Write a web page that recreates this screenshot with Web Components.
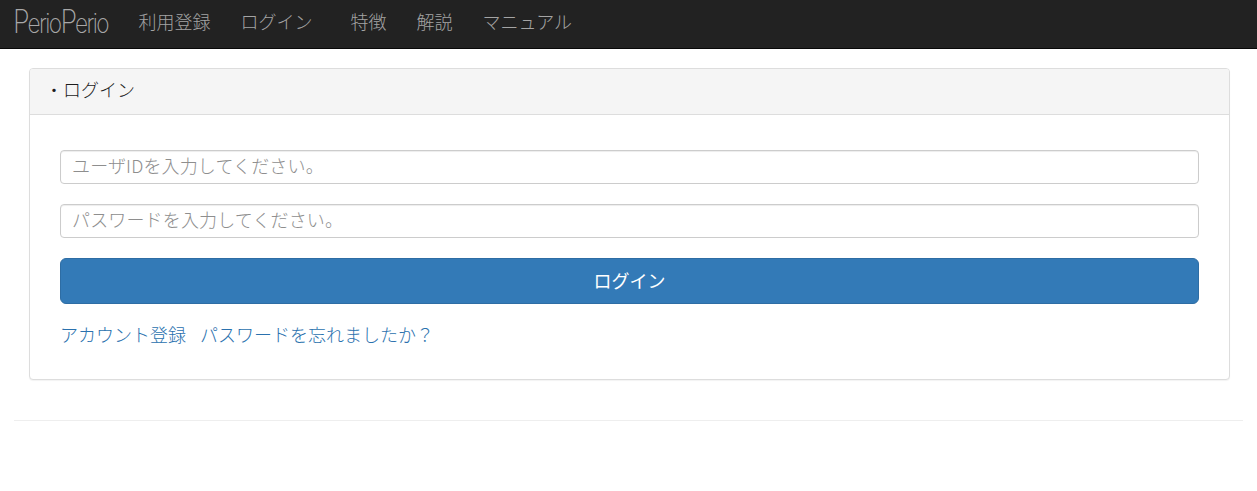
<!DOCTYPE html>
<html lang="ja">
<head>
<meta charset="utf-8">
<title>PerioPerio</title>
<style>
  html, body { margin: 0; padding: 0; background: #fff; }
  body { font-family: "Noto Sans CJK JP", "Liberation Sans", sans-serif; font-size: 18px; font-weight: 300; color: #333; }
</style>
</head>
<body>
<app-navbar>
  <nav-link>利用登録</nav-link>
  <nav-link style="margin-right:8px">ログイン</nav-link>
  <nav-link>特徴</nav-link>
  <nav-link>解説</nav-link>
  <nav-link>マニュアル</nav-link>
</app-navbar>
<login-page>
  <login-panel heading="・ログイン">
    <text-field placeholder="ユーザIDを入力してください。"></text-field>
    <text-field placeholder="パスワードを入力してください。" type="password"></text-field>
    <primary-button>ログイン</primary-button>
    <div slot="links">
      <text-link>アカウント登録</text-link>
      <text-link>パスワードを忘れましたか？</text-link>
    </div>
  </login-panel>
</login-page>

<script>
const FONT = '"Noto Sans CJK JP", "Liberation Sans", sans-serif';

class AppNavbar extends HTMLElement {
  constructor() {
    super();
    this.attachShadow({ mode: 'open' }).innerHTML = `
      <style>
        :host { display: flex; align-items: center; height: 48px; background: #222; border-bottom: 1px solid #080808; padding-left: 15px; }
        .logo { width: 94px; margin-right: 29.5px; }
        .brand { display: inline-flex; align-items: baseline; margin: -3px 0 0 -2px; color: #a8a8a8; font: 200 27px/46px Inter, Lato, sans-serif; letter-spacing: -1.9px; white-space: nowrap; transform: scaleX(.84); transform-origin: left center; }
        .brand b { font-weight: 200; font-size: 32px; letter-spacing: -2.4px; }
        .links { display: flex; gap: 30px; padding-bottom: 7px; }
      </style>
      <div class="logo"><span class="brand"><b>P</b>erio<b>P</b>erio</span></div>
      <div class="links"><slot></slot></div>`;
  }
}

class NavLink extends HTMLElement {
  constructor() {
    super();
    this.attachShadow({ mode: 'open' }).innerHTML = `
      <style>
        :host { display: block; color: #a4a4a4; font: 300 18px/24px ${FONT}; white-space: nowrap; }
      </style>
      <slot></slot>`;
  }
}

class LoginPage extends HTMLElement {
  constructor() {
    super();
    this.attachShadow({ mode: 'open' }).innerHTML = `
      <style>
        :host { display: block; padding: 19px 15px 0; }
        .inner { padding: 0 14px 0 14px; margin-right: -2px; }
        hr { border: 0; border-top: 1px solid #eee; margin: 40px -1px 0 -1px; }
      </style>
      <div class="inner"><slot></slot></div>
      <hr>`;
  }
}

class LoginPanel extends HTMLElement {
  constructor() {
    super();
    this.attachShadow({ mode: 'open' }).innerHTML = `
      <style>
        :host { display: block; background: #fff; border: 1px solid #ddd; border-radius: 4px; box-shadow: 0 1px 1px rgba(0,0,0,.05); }
        header { height: 46px; line-height: 41px; box-sizing: border-box; padding-left: 15px; background: #f5f5f5; border-bottom: 1px solid #ddd; border-radius: 3px 3px 0 0; color: #1c1c1c; font-size: 18px; font-weight: 300; }
        .body { display: flex; flex-direction: column; gap: 20px; padding: 35px 30px 32px; }
        .links { margin-top: -3px; }
      </style>
      <header></header>
      <div class="body">
        <slot></slot>
        <div class="links"><slot name="links"></slot></div>
      </div>`;
    this.shadowRoot.querySelector('header').textContent = this.getAttribute('heading');
  }
}

class TextField extends HTMLElement {
  constructor() {
    super();
    this.attachShadow({ mode: 'open' }).innerHTML = `
      <style>
        :host { display: block; }
        input { display: block; width: 100%; height: 34px; box-sizing: border-box; padding: 2px 12px 6px 11px; border: 1px solid #ccc; border-radius: 4px; background: #fff; font: 300 18px ${FONT}; letter-spacing: .15px; color: #555; box-shadow: inset 0 1px 1px rgba(0,0,0,.075); outline: none; }
        input::placeholder { color: #8e8e8e; opacity: 1; }
      </style>
      <input>`;
    const input = this.shadowRoot.querySelector('input');
    input.placeholder = this.getAttribute('placeholder');
    input.type = this.getAttribute('type') || 'text';
  }
}

class PrimaryButton extends HTMLElement {
  constructor() {
    super();
    this.attachShadow({ mode: 'open' }).innerHTML = `
      <style>
        :host { display: block; }
        button { display: block; width: 100%; height: 46px; padding: 0 0 3px; background: #337ab7; border: 1px solid #2e6da4; border-radius: 6px; color: #fff; font: 400 18px ${FONT}; }
      </style>
      <button><slot></slot></button>`;
  }
}

class TextLink extends HTMLElement {
  constructor() {
    super();
    this.attachShadow({ mode: 'open' }).innerHTML = `
      <style>
        :host { display: inline; color: #2a71ae; font: 300 18px/24px ${FONT}; }
        :host(:not(:first-child)) { margin-left: 10px; }
      </style>
      <slot></slot>`;
  }
}

customElements.define('app-navbar', AppNavbar);
customElements.define('nav-link', NavLink);
customElements.define('login-page', LoginPage);
customElements.define('login-panel', LoginPanel);
customElements.define('text-field', TextField);
customElements.define('primary-button', PrimaryButton);
customElements.define('text-link', TextLink);
</script>
</body>
</html>
